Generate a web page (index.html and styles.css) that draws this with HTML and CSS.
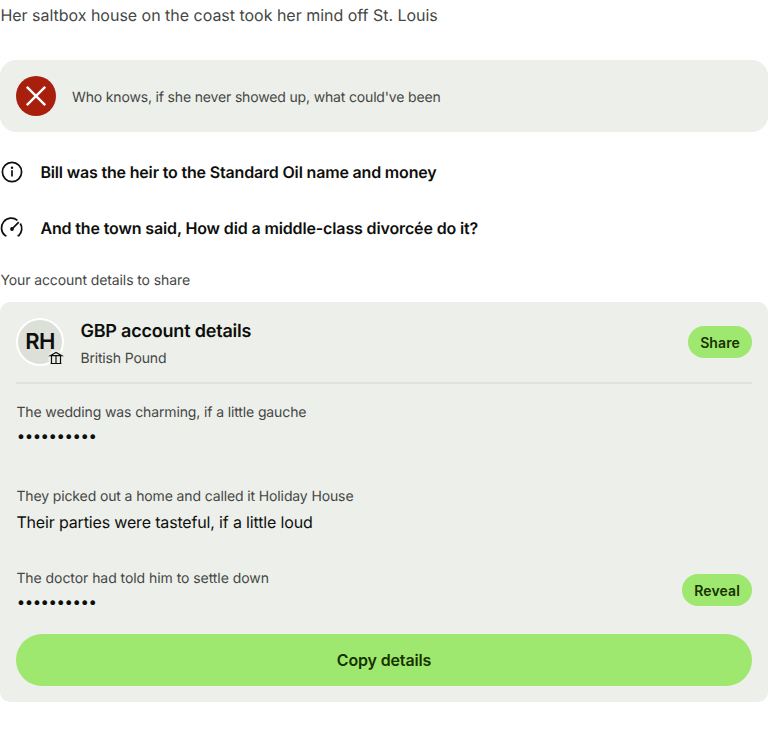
FILE: index.html
```html
<!DOCTYPE html>
<html lang="en">
<head>
<meta charset="utf-8">
<title>Account details</title>
<link rel="stylesheet" href="styles.css">
</head>
<body>
<main>
<p class="intro">Her saltbox house on the coast took her mind off St. Louis</p>
<section class="alert">
<svg class="status" viewBox="0 0 40 40"><circle cx="20" cy="20" r="20" fill="#a8200d"/><path d="M10.8 10.8l18.4 18.4M29.2 10.8L10.8 29.2" stroke="#fff" stroke-width="2.4"/></svg>
<p>Who knows, if she never showed up, what could've been</p>
</section>
<ul class="links">
<li><svg viewBox="0 0 24 24"><circle cx="12" cy="12" r="9.6"/><path d="M12 10.3v6.2"/><circle class="dot" cx="12" cy="7.8" r="1.2"/></svg><span>Bill was the heir to the Standard Oil name and money</span></li>
<li><svg viewBox="0 0 24 24"><path d="M6.4 19.9L5 19.4A9.7 9.7 0 0 1 17.4 4.4M20.3 7.5A9.7 9.7 0 0 1 19 19.4L17.6 19.9M12 13l6.8-6.8"/><circle class="dot" cx="12" cy="13" r="1.9"/></svg><span class="wide">And the town said, How did a middle-class divorcée do it?</span></li>
</ul>
<h2 class="section-title">Your account details to share</h2>
<section class="card">
<header>
<div class="avatar">RH<svg viewBox="0 0 16 16"><circle class="badge" cx="8" cy="8" r="8"/><path d="M2.6 13.5h10.8M2.2 5.7L8 2.4l5.8 3.3zM3.5 5.7v7.8M12.5 5.7v7.8M8 5.7v7.8"/></svg></div>
<div class="heading"><h3>GBP account details</h3><p>British Pound</p></div>
<button>Share</button>
</header>
<div class="field first"><div><p class="label">The wedding was charming, if a little gauche</p><p class="value dots">••••••••••</p></div></div>
<div class="field second"><div><p class="label">They picked out a home and called it Holiday House</p><p class="value">Their parties were tasteful, if a little loud</p></div></div>
<div class="field third"><div><p class="label">The doctor had told him to settle down</p><p class="value dots">••••••••••</p></div><button>Reveal</button></div>
<button class="copy">Copy details</button>
</section>
</main>
</body>
</html>
```
FILE: styles.css
```css
* { box-sizing: border-box; }
body { margin: 0; background: #fff; color: #0e0f0c; font-family: Inter, sans-serif; text-rendering: geometricPrecision; }
p, h2, h3, ul { margin: 0; padding: 0; }
.intro { font-size: 16px; line-height: 24px; padding: 3px 0 0 0.4px; height: 60px; color: #454745; letter-spacing: -0.02px; }
.alert { height: 72px; border-radius: 16px; background: #ecefea; padding: 16px; display: flex; align-items: center; gap: 16px; font-size: 14px; line-height: 22px; color: #454745; letter-spacing: -0.16px; }
.alert p { padding-top: 3px; }
.status { width: 40px; height: 40px; }
.links { list-style: none; padding-top: 12px; }
.links li { height: 56px; display: flex; align-items: center; gap: 16.4px; font-size: 16px; font-weight: 600; letter-spacing: -0.17px; }
.links .wide { letter-spacing: -0.135px; }
svg { display: block; flex: none; fill: none; stroke-width: 1.7; }
.links svg { width: 24px; height: 24px; stroke: #0e0f0c; }
.links .dot { fill: #0e0f0c; stroke: none; }
.section-title { font-size: 14px; line-height: 22px; font-weight: 400; color: #454745; margin-top: 14px; padding-left: 0.4px; letter-spacing: -0.1px; }
.card { margin-top: 10px; height: 400px; border-radius: 10px; background: #ecefea; padding: 16px; }
header { height: 66px; border-bottom: 2px solid #dfe2dd; display: flex; align-items: flex-start; }
.avatar { width: 48px; height: 48px; border: 2px solid #fff; border-radius: 50%; background: #dce0d8; display: flex; align-items: center; justify-content: center; font-size: 22px; font-weight: 600; letter-spacing: -0.6px; position: relative; }
.avatar svg { width: 16px; height: 16px; position: absolute; right: -2px; bottom: -2px; stroke: #0e0f0c; stroke-width: 1.2; }
.avatar .badge { fill: #ecefea; stroke: none; }
.heading { margin-left: 16.4px; flex: 1; padding-top: 2px; }
h3 { font-size: 18px; line-height: 24px; font-weight: 600; letter-spacing: -0.2px; }
.heading p { font-size: 14px; line-height: 22px; margin-top: 4px; color: #454745; letter-spacing: -0.16px; }
button { font: 600 14px/22px Inter, sans-serif; color: #163300; background: #9fe870; border: 0; border-radius: 999px; height: 32px; padding: 1px 12px 0; letter-spacing: 0.12px; }
header button { margin-top: 8px; }
.field { display: flex; justify-content: space-between; align-items: flex-start; }
.first { height: 84px; margin-top: 16px; }
.second { height: 82px; }
.third { height: 48px; margin-bottom: 20px; }
.third button { margin-top: 8px; }
.label { font-size: 14px; line-height: 22px; padding: 2px 0 0 0.4px; color: #454745; letter-spacing: -0.125px; }
.third .label { letter-spacing: -0.06px; }
.value { font-size: 16px; line-height: 24px; margin-top: 2px; padding-left: 0.4px; letter-spacing: -0.16px; }
.value.dots { font-size: 15px; line-height: 20px; letter-spacing: -0.46px; margin-top: 2px; padding-left: 0.7px; }
.copy { display: block; width: 100%; height: 52px; font-size: 16px; letter-spacing: -0.15px; padding-top: 0; }
```
